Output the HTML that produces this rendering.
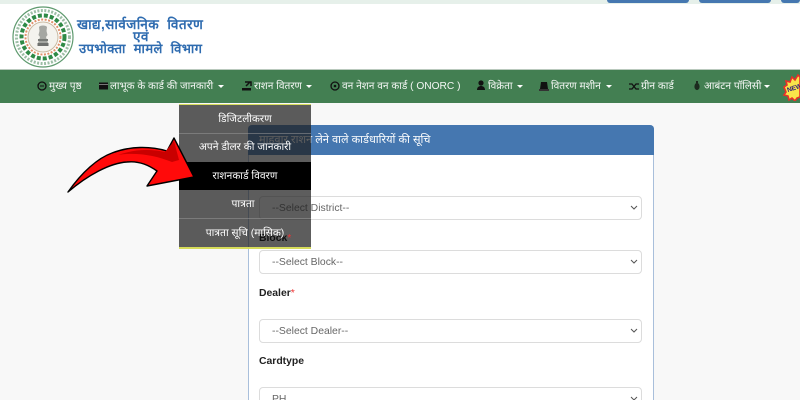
<!DOCTYPE html>
<html lang="hi">
<head>
<meta charset="utf-8">
<style>
html,body{margin:0;padding:0;width:800px;height:400px;overflow:hidden}
body{background:#f8f8f8;font-family:"Liberation Sans","Noto Sans CJK SC",sans-serif;color:#222}
#wrap{position:relative;width:800px;height:400px;overflow:hidden;background:#f8f8f8}
.abs{position:absolute;white-space:nowrap}
#strip{left:0;top:0;width:800px;height:4px;background:#e6f0ea}
#head{left:0;top:4px;width:800px;height:65px;background:#fff}
.tb{position:absolute;top:0;height:3px;background:#4577b0;border-radius:0 0 3px 3px}
#nav{left:0;top:69px;width:800px;height:34px;background:#437f52;border-top:1px solid #b9c9bd;box-sizing:border-box}
.n{position:absolute;top:79.5px;font-size:10.2px;line-height:14px;color:#f4f7f4;white-space:nowrap}
.caret{position:absolute;top:85px;width:0;height:0;border-left:3px solid transparent;border-right:3px solid transparent;border-top:3px solid #fff}
.logo{color:#2f6cb0;font-weight:bold;font-size:13.6px;line-height:16px;letter-spacing:.4px}
#panel{left:248px;top:125px;width:406px;height:275px;background:#fff;border:1px solid #a9bfdb;border-bottom:0;box-sizing:border-box;border-radius:4px 4px 0 0}
#phead{left:248px;top:125px;width:406px;height:30px;background:#4577b0;border-radius:4px 4px 0 0;color:#fff;font-size:11.1px;line-height:30px;text-indent:11px}
.sel{position:absolute;left:259px;width:383px;height:24px;background:#fff;border:1px solid #dcdcdc;box-sizing:border-box;border-radius:4px;color:#666;font-size:10.4px;line-height:24px;padding-left:12px}
.sel svg{position:absolute;right:3px;top:8px}
.lb{position:absolute;left:259px;font-size:10.4px;line-height:14px;font-weight:bold;color:#222}
.lb i{color:#e33;font-style:normal;font-weight:normal}
#menu{left:179px;top:104px;width:132px;height:145px;background:rgba(30,30,30,.72);border-top:1px solid #d6dc5a;border-bottom:2px solid #d6dc5a;box-sizing:border-box}
.mi{position:absolute;left:179px;width:132px;text-align:center;font-size:10.4px;line-height:14px;color:#fff}
.ml{position:absolute;left:179px;width:132px;height:1px;background:rgba(150,150,150,.55)}
#act{left:179px;top:162px;width:132px;height:28px;background:#000}
</style>
</head>
<body>
<div id="wrap">
<div class="abs" id="strip"></div>
<div class="abs" id="head"></div>
<div class="tb" style="left:607px;width:82px"></div>
<div class="tb" style="left:699px;width:72px"></div>
<div class="tb" style="left:781px;width:19px"></div>

<svg class="abs" style="left:11px;top:5px" width="64" height="64" viewBox="0 0 64 64">
<circle cx="32" cy="32" r="30" fill="#fff" stroke="#5e9a6e" stroke-width="1.2"/>
<circle cx="32" cy="32" r="26.5" fill="none" stroke="#9dbfa6" stroke-width="3" stroke-dasharray="2 1.5"/>
<circle cx="32" cy="32" r="21.5" fill="none" stroke="#2f8a46" stroke-width="4" stroke-dasharray="4 2"/>
<circle cx="32" cy="32" r="17.5" fill="none" stroke="#e0916a" stroke-width="2" stroke-dasharray="2 1.5"/>
<circle cx="32" cy="32" r="15" fill="#f4f3ee" stroke="#c9b9a0" stroke-width="1"/>
<path d="M28 22c1-2 7-2 8 0l-.5 4 1 4-1.500 2 2 6H27l2-6-1.500-2 1-4z" fill="#a5a7a2"/>
<rect x="27" y="34" width="10" height="2" fill="#777a76"/>
<rect x="26.500" y="38" width="11" height="3" fill="#6f716e"/>
</svg>

<div class="abs logo" style="left:77px;top:17px">खाद्य,सार्वजनिक&nbsp; वितरण</div>
<div class="abs logo" style="left:133px;top:31px;line-height:12px">एवं</div>
<div class="abs logo" style="left:79px;top:41px;font-size:13px">उपभोक्ता&nbsp; मामले&nbsp; विभाग</div>

<div class="abs" id="nav"></div>
<svg class="abs" style="left:37px;top:81px" width="10" height="10" viewBox="0 0 10 10"><circle cx="5" cy="5" r="4" fill="none" stroke="#111" stroke-width="1.3"/><path d="M3 5h4" stroke="#111"/></svg>
<div class="n" style="left:49px">मुख्य पृष्ठ</div>
<svg class="abs" style="left:99px;top:82px" width="9" height="8" viewBox="0 0 9 8"><rect width="9" height="7" y=".5" fill="#111"/><rect y="2" width="9" height="1" fill="#777"/></svg>
<div class="n" style="left:110px">लाभूक के कार्ड की जानकारी</div>
<div class="caret" style="left:218px"></div>
<svg class="abs" style="left:242px;top:81px" width="10" height="10" viewBox="0 0 10 10"><path d="M3 1h6v4M8 1L4 5" stroke="#111" fill="none" stroke-width="1.5"/><rect y="7" width="9" height="2.500" fill="#111"/></svg>
<div class="n" style="left:254px">राशन वितरण</div>
<div class="caret" style="left:306px"></div>
<svg class="abs" style="left:330px;top:81px" width="10" height="10" viewBox="0 0 10 10"><circle cx="5" cy="5" r="4" fill="none" stroke="#111" stroke-width="1.3"/><circle cx="5" cy="5" r="1.3" fill="#111"/></svg>
<div class="n" style="left:342px">वन नेशन वन कार्ड ( ONORC )</div>
<svg class="abs" style="left:476px;top:80px" width="10" height="11" viewBox="0 0 10 11"><circle cx="5" cy="3" r="2.600" fill="#111"/><path d="M1 10c0-3 2-4 4-4s4 1 4 4z" fill="#111"/></svg>
<div class="n" style="left:488px">विक्रेता</div>
<div class="caret" style="left:517px"></div>
<svg class="abs" style="left:539px;top:81px" width="10" height="10" viewBox="0 0 10 10"><path d="M2 1h6l1 7H1z" fill="#111"/><rect y="8" width="10" height="2" fill="#333"/></svg>
<div class="n" style="left:551px">वितरण मशीन</div>
<div class="caret" style="left:606px"></div>
<svg class="abs" style="left:629px;top:82px" width="11" height="9" viewBox="0 0 11 9"><path d="M0 2h3l4 5h3M0 7h3l4-5h3" stroke="#111" stroke-width="1.3" fill="none"/></svg>
<div class="n" style="left:641px">ग्रीन कार्ड</div>
<svg class="abs" style="left:694px;top:81px" width="6" height="10" viewBox="0 0 6 10"><ellipse cx="3" cy="5.500" rx="2.600" ry="3.600" fill="#1c2b1f"/><rect x="2" y="0" width="2" height="2" fill="#1c2b1f"/></svg>
<div class="n" style="left:704px">आबंटन पॉलिसी</div>
<div class="caret" style="left:764px"></div>
<svg class="abs" style="left:782px;top:73px" width="18" height="28" viewBox="0 0 18 28">
<path d="M2 14l3-2-1-4 4 1 2-5 3 3 3-5 2 2v20l-3 1-2 3-3-3-3 2-1-4-4-1 2-3z" fill="#f9e64a" stroke="#e8302a" stroke-width="1.600"/>
<text x="5" y="18" font-size="6.500" font-weight="bold" font-family="Liberation Sans" fill="#2a1a7a" transform="rotate(-18 9 16)">NEW</text>
</svg>

<div class="abs" id="panel"></div>
<div class="abs" id="phead">माहवार राशन लेने वाले कार्डधारियों की सूचि</div>

<div class="sel" style="top:196px">--Select District--<svg width="8" height="6" viewBox="0 0 8 6"><path d="M1 1l3 3 3-3" fill="none" stroke="#555"/></svg></div>
<div class="sel" style="top:250px">--Select Block--<svg width="8" height="6" viewBox="0 0 8 6"><path d="M1 1l3 3 3-3" fill="none" stroke="#555"/></svg></div>
<div class="lb" style="top:287px">Dealer<i>*</i></div>
<div class="sel" style="top:319px">--Select Dealer--<svg width="8" height="6" viewBox="0 0 8 6"><path d="M1 1l3 3 3-3" fill="none" stroke="#555"/></svg></div>
<div class="lb" style="top:355px">Cardtype</div>
<div class="sel" style="top:387px">PH<svg width="8" height="6" viewBox="0 0 8 6"><path d="M1 1l3 3 3-3" fill="none" stroke="#555"/></svg></div>

<div class="abs" id="menu"></div>
<div class="lb" style="top:232px;color:#111">Block<i>*</i></div>
<div class="abs" id="act"></div>
<div class="ml" style="top:133px"></div>
<div class="ml" style="top:218px"></div>
<div class="mi" style="top:113px">डिजिटलीकरण</div>
<div class="mi" style="top:141px">अपने डीलर की जानकारी</div>
<div class="mi" style="top:170px">राशनकार्ड विवरण</div>
<div class="mi" style="top:198px;left:177px">पात्रता</div>
<div class="mi" style="top:227px">पात्रता सूचि (मासिक)</div>

<svg class="abs" style="left:60px;top:130px" width="140" height="70" viewBox="60 130 140 70">
<path d="M68 192C82 172 98 158 112 153C130 146 150 146 167 151L174 138L194 177L147 186L157 171C146 163 136 161 127 162C110 163 88 175 68 192Z" fill="#ff0a0a" stroke="#000" stroke-width="1.400" stroke-linejoin="round"/>
<path d="M118 155C135 149 150 149 165 152L174 141L179 160L172 162C155 155 135 152 118 155Z" fill="#c90000"/>
</svg>
</div>
</body>
</html>
